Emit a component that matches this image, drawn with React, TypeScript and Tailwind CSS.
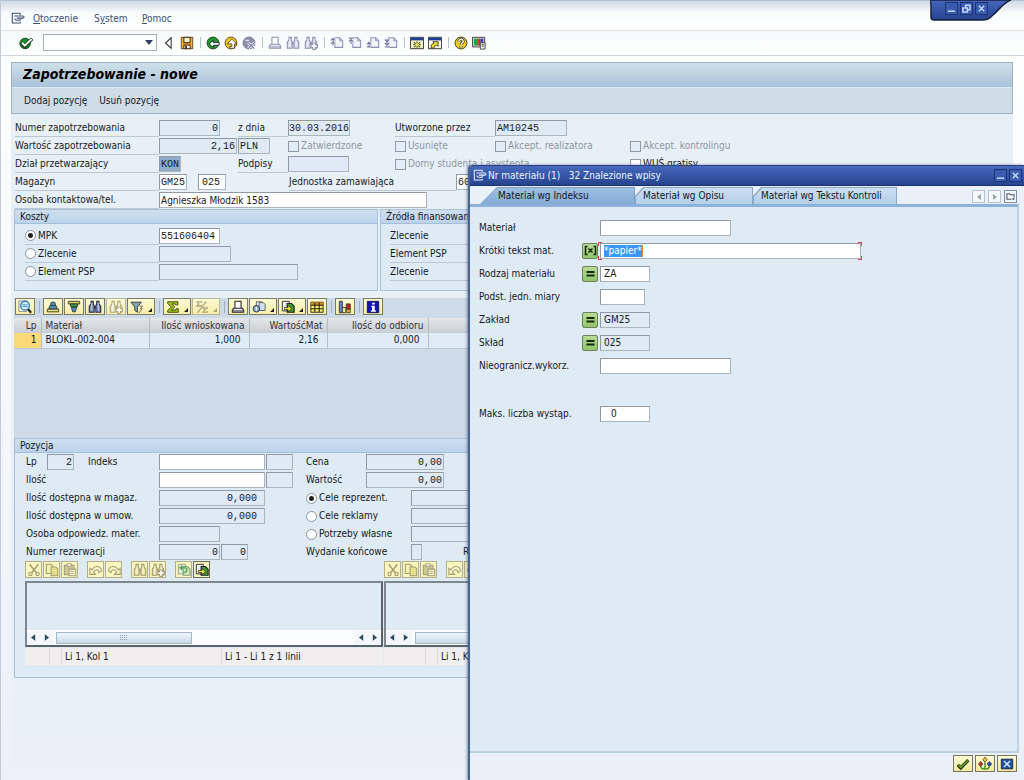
import React from "react";

const field =
  "h-[16px] border border-[#aab4bd] border-t-[#8f9aa5] border-l-[#8f9aa5] text-[10px] leading-[14px] outline-none rounded-none";
const mono = "font-['Liberation_Mono',monospace]";
const rowLine = "flex h-[18px] items-center border-b border-[#bcc8d3]";

function Field({
  id,
  label,
  value = "",
  w,
  edit = false,
  right = false,
  sans = false,
  pad = "px-[3px]",
}: {
  id: string;
  label?: string;
  value?: string;
  w: string;
  edit?: boolean;
  right?: boolean;
  sans?: boolean;
  pad?: string;
}) {
  return (
    <input
      id={id}
      aria-label={label}
      defaultValue={value}
      readOnly={!edit}
      className={`${field} ${w} ${edit ? "bg-white" : "bg-[#dfeaf4]"} ${
        right ? "text-right" : ""
      } ${sans ? "" : mono} ${pad}`}
    />
  );
}

function Check({ label, dim = true }: { label: string; dim?: boolean }) {
  return (
    <label
      className={`flex items-center gap-[2px] whitespace-nowrap ${
        dim ? "text-[#8e979f]" : "text-[#1b1b1b]"
      }`}
    >
      <input
        type="checkbox"
        disabled={dim}
        className={`h-[11px] w-[11px] shrink-0 appearance-none border border-[#8f9aa5] ${
          dim ? "bg-[#e3edf6]" : "bg-white"
        }`}
      />
      {label}
    </label>
  );
}

function Radio({
  name,
  label,
  on = false,
}: {
  name: string;
  label: string;
  on?: boolean;
}) {
  return (
    <label className="flex items-center gap-[2px] whitespace-nowrap">
      <input
        type="radio"
        name={name}
        defaultChecked={on}
        className="h-[11px] w-[11px] shrink-0 appearance-none rounded-full border border-[#8a939c] bg-white checked:bg-[radial-gradient(circle,#222_0,#222_2px,#fff_3px)]"
      />
      {label}
    </label>
  );
}

/* ---------- icons ---------- */

function Svg({
  children,
  size = "h-[14px] w-[14px]",
}: {
  children: React.ReactNode;
  size?: string;
}) {
  return (
    <svg viewBox="0 0 16 16" className={`${size} shrink-0`} fill="none">
      {children}
    </svg>
  );
}

function MenuIcon({ color }: { color: string }) {
  return (
    <Svg>
      <path
        d="M10.500 3.500V1.500H1.500V12.500H10.500V11"
        stroke={color}
        strokeWidth="1.2"
      />
      <path
        d="M4 4.500h9.500c1.800 0 1.800 2.500 0 2.500H10.500v2.500H6L4 7.500M6.500 7h4"
        stroke={color}
        strokeWidth="1.2"
      />
    </Svg>
  );
}

function OkIcon() {
  return (
    <Svg>
      <circle cx="7" cy="8.5" r="6" fill="#1f8a2d" stroke="#0d3c14" />
      <path d="M3 7.500l3.500 4L15 3" stroke="#10300f" strokeWidth="4" />
      <path d="M3.500 7.500l3 3.500L14.500 3.500" stroke="#fff" strokeWidth="2.200" />
    </Svg>
  );
}

function BackTri() {
  return (
    <Svg>
      <path d="M10.500 2v12L4 8z" fill="#fff" stroke="#333" strokeWidth="1.2" />
    </Svg>
  );
}

function SaveIcon() {
  return (
    <Svg>
      <path d="M1.500 1.500h13v13h-13z" fill="#e0882a" stroke="#3a2610" />
      <path d="M4.500 1.500h7v6h-7z" fill="#f4f0c0" stroke="#3a2610" />
      <path d="M4.500 10.500h7v4h-7z" fill="#fff" stroke="#3a2610" />
      <path d="M6 11.500h2v3H6z" fill="#3a2610" />
      <path d="M2.500 2v12M13.500 2v12" stroke="#f7d34a" />
    </Svg>
  );
}

function NavBack() {
  return (
    <Svg>
      <circle cx="8" cy="8" r="6.800" fill="#25952f" stroke="#143d18" />
      <path
        d="M3.500 9l5-4v2.500h6.500v3H8.500V13z"
        fill="#fff"
        stroke="#113"
        strokeWidth=".9"
      />
    </Svg>
  );
}

function NavExit() {
  return (
    <Svg>
      <circle cx="8" cy="8" r="6.800" fill="#f0c516" stroke="#5a4310" />
      <path
        d="M3.500 9L9 3.500 14.500 9H12v5H6.500v-2H9V9z"
        fill="#fff"
        stroke="#432"
        strokeWidth=".9"
      />
    </Svg>
  );
}

function NavCancel() {
  return (
    <Svg>
      <circle cx="8" cy="8" r="6.800" fill="#8f8fae" stroke="#71718f" />
      <path d="M7 7.500l7 7M14 7.500l-7 7" stroke="#fff" strokeWidth="3" />
      <path d="M7 7.500l7 7M14 7.500l-7 7" stroke="#6d6d8d" strokeWidth="1.200" />
      <path d="M4 5h4" stroke="#e3e3ef" strokeWidth="1.400" />
    </Svg>
  );
}

function PrintIcon({ color = "#9090b2" }: { color?: string }) {
  return (
    <Svg>
      <path d="M4.500 9.500v-8h7v8" fill="#fff" stroke={color} strokeWidth="1.2" />
      <path
        d="M3 9.500h10l1.500 2v2.500h-13v-2.500z"
        fill="#e9e9f2"
        stroke={color}
        strokeWidth="1.2"
      />
      <path d="M2 12.500h12" stroke={color} />
    </Svg>
  );
}

function FindIcon({
  color = "#9090b2",
  fill = "#dcdcec",
  plus = false,
}: {
  color?: string;
  fill?: string;
  plus?: boolean;
}) {
  return (
    <Svg>
      <path
        d="M3.500 1.500h2.500v3l1 2v7.500H1.500V7l2-2.500zM10 1.500h2.500v3l2 2.500v7H9V6.500l1-2z"
        fill={fill}
        stroke={color}
        strokeWidth="1.300"
      />
      <path d="M7 7h2v3H7z" fill={color} />
      <path d="M4.300 3v9M11.800 3v9" stroke="#fff" strokeOpacity=".7" />
      {plus && (
        <>
          <path d="M11.500 7.500v8.500M7.500 11.500h8.500" stroke={color} strokeWidth="4" />
          <path d="M11.500 8.500v6M8.500 11.500h6" stroke="#fff" strokeWidth="2" />
        </>
      )}
    </Svg>
  );
}

function PageIcon({ kind }: { kind: number }) {
  const arrows = [
    "M1 5l2.500-2.500L6 5M1 9l2.500-2.500L6 9M3.500 3v8",
    "M1 2.500h5M1 6.500L3.500 4 6 6.500M3.500 4v5",
    "M1 9.500L3.500 7 6 9.500M3.500 7v5M1 12.500h5",
    "M1 4l2.500 2.500L6 4M1 8l2.500 2.500L6 8M1 12.500h5M3.500 3v8",
  ];
  return (
    <Svg>
      <path
        d="M5.500 2h5.500l3.500 3.500V13h-9z"
        fill="#f3f3fa"
        stroke="#8f8fb3"
        strokeWidth="1.2"
      />
      <path d="M11 2v3.500h3.500" stroke="#8f8fb3" />
      <path d={arrows[kind]} stroke="#fff" strokeWidth="3" />
      <path d={arrows[kind]} stroke="#7a7aa4" strokeWidth="1.300" />
    </Svg>
  );
}

function SessionIcon() {
  return (
    <Svg>
      <path d="M.5 1.500h15v13H.5z" fill="#f6f4c4" stroke="#222" />
      <path d="M1 2h14v3H1z" fill="#1c3f9c" />
      <path
        d="M8 6v2.500M8 11.500V14M3.500 10H6M10 10h2.500M4.500 7l2 2M11.500 7l-2 2M4.500 13l2-2M11.500 13l-2-2"
        stroke="#55551a"
        strokeWidth="1.200"
      />
      <path d="M7 9h2v2H7z" fill="#f0e020" />
    </Svg>
  );
}

function ShortcutIcon() {
  return (
    <Svg>
      <path d="M.5 1.500h15v13H.5z" fill="#f6f4e4" stroke="#222" />
      <path d="M1 2h14v3H1z" fill="#1c3f9c" />
      <path
        d="M3.500 13.500L4 10l3-2-1.500-1.500h6v5.500L10 10.500l-2.500 1-1 2.500z"
        fill="#f0e030"
        stroke="#333"
      />
    </Svg>
  );
}

function HelpIcon() {
  return (
    <Svg>
      <circle cx="8" cy="8" r="6.800" fill="#efcb22" stroke="#3a3010" />
      <path
        d="M5.500 6.500C5.500 2.500 11 3 10.500 6.500 10.500 8 8 8 8 10M8 11.500v1.700"
        stroke="#333"
        strokeWidth="3.200"
      />
      <path
        d="M5.500 6.500C5.500 2.500 11 3 10.500 6.500 10.500 8 8 8 8 10M8 11.500v1.700"
        stroke="#fff"
        strokeWidth="1.500"
      />
    </Svg>
  );
}

function MonitorIcon() {
  return (
    <Svg>
      <path d="M.5 1.500h14v11H.5z" fill="#ddd" stroke="#333" />
      <path d="M2 3h5v8H2z" fill="#27a33a" />
      <path d="M7 3h3v8H7z" fill="#d02a2a" />
      <path d="M10 3h3v8h-3z" fill="#2a4ed0" />
      <path d="M9.500 7.500h5.500v7.500H9.500z" fill="#e8e8e8" stroke="#444" />
      <path d="M11 9.500h2.500M11 11.500h2.500" stroke="#444" />
    </Svg>
  );
}

function DetailIcon() {
  return (
    <Svg>
      <path d="M1 1h9v12H1z" fill="#f3f3e8" stroke="#888" />
      <circle cx="8" cy="6.500" r="5" fill="#d6f2fb" stroke="#3b83b8" strokeWidth="1.600" />
      <path d="M5 5.500h6M5 7.500h6" stroke="#3b83b8" />
      <path d="M11.500 10.500l3.500 4" stroke="#222" strokeWidth="2.500" />
    </Svg>
  );
}

function SortIcon({ down = false }: { down?: boolean }) {
  return (
    <Svg>
      {down ? (
        <>
          <path d="M1.500 1.500h13v3h-13z" fill="#d8d84c" stroke="#333" />
          <path d="M3.500 4.500h9l-1 3.500h-7z" fill="#2f9c46" stroke="#333" />
          <path d="M5 8.500h6l-1.500 5h-3z" fill="#4a8fd0" stroke="#333" />
        </>
      ) : (
        <>
          <path d="M6 2.500h4l1 4H5z" fill="#4a8fd0" stroke="#333" />
          <path d="M4.500 6.500h7l1.500 3.500H3z" fill="#4a9ccc" stroke="#333" />
          <path d="M1.500 10.500h13v3h-13z" fill="#e4e46a" stroke="#333" />
        </>
      )}
    </Svg>
  );
}

function FilterIcon() {
  return (
    <Svg>
      <path d="M1 2.500h12L8.500 8v6l-3-2V8z" fill="#7fa6b8" stroke="#333" />
      <path d="M11 7h3l-2 3h2l-4 5" stroke="#555" />
    </Svg>
  );
}

function SumIcon() {
  return (
    <Svg>
      <path
        d="M2 2h11.500v3.500H11l-.5-1H6.500L10 8l-4 3.500h5l.5-1.500h2.500v4H2v-2l4-4-4-4z"
        fill="#a6c81e"
        stroke="#2c3a08"
      />
    </Svg>
  );
}

function SubtotalIcon() {
  return (
    <Svg>
      <path
        d="M2 2h5v1.500M2 2l2.500 2.500L2 7h5V5.500M9 9h5v1.500M9 9l2.500 2.500L9 14h5v-1.500M13 1.500L3 14.500"
        stroke="#a7a37e"
        strokeWidth="1.400"
      />
    </Svg>
  );
}

function ViewsIcon() {
  return (
    <Svg>
      <path d="M5 2h6l2.500 2.500V12H5z" fill="#fff" stroke="#556" />
      <path d="M8 3h5l2 2v7H8z" fill="#cfe0f0" stroke="#556" />
      <circle cx="5" cy="10" r="3.800" fill="#7fa8d4" stroke="#334" />
      <path d="M5 8v4" stroke="#fff" strokeWidth="1.400" />
    </Svg>
  );
}

function ExportIcon({ dim = false, back = false }: { dim?: boolean; back?: boolean }) {
  const line = dim ? "#8c9a7c" : "#222";
  return (
    <Svg>
      <path d="M1.500 1.500h8v11h-8z" fill="#e8eef6" stroke={line} />
      <path
        d="M7 4h5l3 3v7H7z"
        fill={dim ? "#cfe8c0" : "#3f9a33"}
        stroke={line}
        strokeWidth="1.300"
      />
      {back ? (
        <path d="M6 3L3.500 5.500 6 8M4 5.500h5c3 0 3 5 0 5H7" stroke="#5fae58" strokeWidth="1.800" />
      ) : (
        <path d="M4 8.500h4V6l4 4-4 3.500V11H4z" fill="#f2e83a" stroke={line} strokeWidth=".8" />
      )}
    </Svg>
  );
}

function LayoutIcon() {
  return (
    <Svg>
      <path d="M1 2.500h14v11.500H1z" fill="#f6ee6a" stroke="#222" />
      <path d="M1 3h14v3H1z" fill="#e68a1c" />
      <path d="M1 6h14M1 10h14M5.500 3v11M10.500 3v11" stroke="#222" strokeWidth="1.200" />
    </Svg>
  );
}

function ChartIcon() {
  return (
    <Svg>
      <path d="M1.500 1.500h3.500v13H1.500z" fill="#5a8ad0" stroke="#333" />
      <path d="M5 8.500h4v6H5z" fill="#eeee8c" stroke="#333" />
      <path d="M9.500 4.500h4.500v6H9.500z" fill="#c82424" stroke="#333" />
      <path d="M10 10.500h4v4h-4z" fill="#e8c030" stroke="#333" />
    </Svg>
  );
}

function InfoIcon() {
  return (
    <Svg>
      <path d="M1.500 1.500h13v13h-13z" fill="#1414b4" stroke="#0a0a50" />
      <path d="M7 3h3v2H7zM6 6.500h4V12h1.500v1.500H5.500V12H7V8H6z" fill="#fff" />
    </Svg>
  );
}

const dimLine = "#a39d70";

function CutIcon() {
  return (
    <Svg>
      <path d="M3 1.500L10.500 11M13 1.500L5.500 11" stroke={dimLine} strokeWidth="1.800" />
      <circle cx="4" cy="12.500" r="1.900" stroke={dimLine} strokeWidth="1.300" />
      <circle cx="12" cy="12.500" r="1.900" stroke={dimLine} strokeWidth="1.300" />
    </Svg>
  );
}

function CopyIcon() {
  return (
    <Svg>
      <path d="M1.500 1.500h5.500l2 2V12H1.500z" fill="#f4f1b8" stroke={dimLine} strokeWidth="1.200" />
      <path d="M7 4.500h5.500l2 2v8H7z" fill="#e6e08c" stroke={dimLine} strokeWidth="1.200" />
    </Svg>
  );
}

function PasteIcon() {
  return (
    <Svg>
      <path d="M1.500 2.500h11v11h-11z" fill="#cdc898" stroke={dimLine} strokeWidth="1.200" />
      <path d="M4.500 1h5v3h-5z" fill="#eee" stroke={dimLine} />
      <path d="M7 7h7.500v7.500H7z" fill="#faf8dc" stroke={dimLine} strokeWidth="1.200" />
      <path d="M8.500 9.500h4M8.500 12h4" stroke={dimLine} />
    </Svg>
  );
}

function UndoIcon({ redo = false }: { redo?: boolean }) {
  return (
    <Svg>
      <path
        d={
          redo
            ? "M15 6v7H8.500l2.500-2.500C9 6.500 5 7 4.500 11L1.500 9C3 2.500 10 2.500 12.500 8z"
            : "M1 6v7h6.500L5 10.500C7 6.500 11 7 11.500 11l3-2C13 2.500 6 2.500 3.500 8z"
        }
        fill="#f8f5cf"
        stroke={dimLine}
        strokeWidth="1.200"
      />
    </Svg>
  );
}

/* ---------- small parts ---------- */

function FlatBtn({ name, children }: { name: string; children: React.ReactNode }) {
  return (
    <button
      aria-label={name}
      className="flex h-[18px] w-[18px] items-center justify-center"
    >
      {children}
    </button>
  );
}

function GridBtn({
  name,
  children,
  menu = false,
  dim = false,
}: {
  name: string;
  children: React.ReactNode;
  menu?: boolean;
  dim?: boolean;
}) {
  return (
    <button
      aria-label={name}
      className={`flex h-[17px] shrink-0 items-center border bg-linear-to-b from-[#fdfbd6] to-[#f6eda6] ${
        menu ? "w-[28px] justify-between px-[2px]" : "w-[20px] justify-center"
      } ${dim ? "border-[#b9b799]" : "border-[#7d7b63]"}`}
    >
      {children}
      {menu && (
        <svg viewBox="0 0 4 4" className="mt-[7px] h-[4px] w-[4px]">
          <path d="M4 0v4H0z" fill={dim ? "#a7a37e" : "#222"} />
        </svg>
      )}
    </button>
  );
}

function EditBtn({
  name,
  children,
  active = false,
}: {
  name: string;
  children: React.ReactNode;
  active?: boolean;
}) {
  return (
    <button
      aria-label={name}
      className={`flex h-[17px] w-[17px] shrink-0 items-center justify-center border bg-[#fbf6c0] ${
        active ? "border-[#6f6d55]" : "border-[#b3af88]"
      }`}
    >
      {children}
    </button>
  );
}

function Sep() {
  return (
    <span className="flex w-[8px] shrink-0 justify-center">
      <span className="h-[11px] w-px bg-[#b3c3d2]" />
    </span>
  );
}

function GridSep() {
  return (
    <span className="flex h-[17px] w-[6px] shrink-0 items-center justify-center">
      <span className="h-[12px] w-px bg-[#9fb2c4]" />
    </span>
  );
}

function Group({
  title,
  className = "",
  children,
}: {
  title: string;
  className?: string;
  children: React.ReactNode;
}) {
  return (
    <section className={`border border-[#a9c1d8] bg-[#dfebf4] ${className}`}>
      <h2 className="h-[14px] border-b border-[#a4bfda] bg-linear-to-b from-[#cfdff0] to-[#bdd3ea] pl-[5px] leading-[13px] whitespace-nowrap">
        {title}
      </h2>
      {children}
    </section>
  );
}

function Arrow({ dir, name }: { dir: "left" | "right"; name: string }) {
  return (
    <button
      aria-label={name}
      className="flex h-[13px] w-[13px] items-center justify-center bg-[#f2f6fa]"
    >
      <svg viewBox="0 0 6 8" className="h-[7px] w-[5px]">
        <path d={dir === "left" ? "M5 0v8L0 4z" : "M1 0v8l5-4z"} fill="#2b4a5c" />
      </svg>
    </button>
  );
}

function Editor({ id, first, thumb }: { id: string; first: string; thumb: string }) {
  return (
    <div className="w-[358px] shrink-0">
      <div className="flex h-[20px] items-start gap-px">
        <EditBtn name="Wytnij"><CutIcon /></EditBtn>
        <EditBtn name="Kopiuj"><CopyIcon /></EditBtn>
        <EditBtn name="Wklej"><PasteIcon /></EditBtn>
        <span className="w-[7px]" />
        <EditBtn name="Cofnij"><UndoIcon /></EditBtn>
        <EditBtn name="Ponów"><UndoIcon redo /></EditBtn>
        <span className="w-[7px]" />
        <EditBtn name="Szukaj"><FindIcon color={dimLine} fill="#e8e3b0" /></EditBtn>
        <EditBtn name="Szukaj dalej"><FindIcon color={dimLine} fill="#e8e3b0" plus /></EditBtn>
        <span className="w-[7px]" />
        <EditBtn name="Wczytaj"><ExportIcon dim back /></EditBtn>
        <EditBtn name="Zapisz lokalnie" active><ExportIcon /></EditBtn>
      </div>
      <div className="border-2 border-[#5b6167] border-t-[#7f868d] border-l-[#7f868d]">
        <textarea
          aria-label={id}
          readOnly
          className="block h-[47px] w-full resize-none bg-[#dfebf4] outline-none"
        />
        <div className="flex h-[15px] items-center bg-[#fafcfd]">
          <Arrow dir="left" name="W lewo" />
          <Arrow dir="right" name="W prawo" />
          <div className="flex flex-1 pl-[3px]">
            <div
              className={`flex h-[12px] items-center justify-center border border-[#a4b8cb] bg-linear-to-b from-[#edf4fa] to-[#cbdbe9] ${thumb}`}
            >
              <svg viewBox="0 0 8 5" className="h-[5px] w-[8px]">
                <path d="M0 .5h8M0 2.500h8M0 4.500h8" stroke="#8ba0b4" strokeDasharray="1 1" />
              </svg>
            </div>
          </div>
          <Arrow dir="left" name="W lewo" />
          <Arrow dir="right" name="W prawo" />
        </div>
      </div>
      <div className="mt-px flex h-[17px] bg-[#f0eeee] leading-[17px]">
        <span className={`border-r border-[#dddcdd] ${first}`} />
        <span className="w-[12px] border-r border-[#dddcdd]" />
        <span className="w-[160px] border-r border-[#dddcdd] pl-[3px]">Li 1, Kol 1</span>
        <span className="flex-1 pl-[3px]">Li 1 - Li 1 z 1 linii</span>
      </div>
    </div>
  );
}

/* ---------- main window ---------- */

function MenuBar() {
  return (
    <nav className="flex h-[31px] items-center border-t border-b border-t-[#b4c2d6] border-b-[#dadfe5] bg-linear-to-b from-[#cfd9e6] via-[#f8fafc] via-40% to-white pt-[7px] pl-[10px] text-[#3c5078]">
      <MenuIcon color="#3c5078" />
      <a href="#otoczenie" className="ml-[8px] w-[61px]"><u>O</u>toczenie</a>
      <a href="#system" className="w-[48px]">S<u>y</u>stem</a>
      <a href="#pomoc"><u>P</u>omoc</a>
    </nav>
  );
}

function ToolBar() {
  return (
    <div className="flex h-[25px] items-center border-b border-[#cdd6de] bg-linear-to-b from-[#f7f9fb] to-white pb-px pl-[16px]">
      <FlatBtn name="Enter"><OkIcon /></FlatBtn>
      <div className="relative ml-[8px] h-[17px] w-[114px]">
        <select
          aria-label="Polecenie"
          className="h-full w-full appearance-none border border-[#a7b0b9] bg-white outline-none"
        />
        <svg viewBox="0 0 8 5" className="pointer-events-none absolute top-[6px] right-[4px] h-[5px] w-[8px]">
          <path d="M0 0h8L4 5z" fill="#2e3f66" />
        </svg>
      </div>
      <span className="w-[3px]" />
      <FlatBtn name="Zwiń"><BackTri /></FlatBtn>
      <FlatBtn name="Zapisz"><SaveIcon /></FlatBtn>
      <Sep />
      <FlatBtn name="Wstecz"><NavBack /></FlatBtn>
      <FlatBtn name="Wyjście"><NavExit /></FlatBtn>
      <FlatBtn name="Anuluj"><NavCancel /></FlatBtn>
      <Sep />
      <FlatBtn name="Drukuj"><PrintIcon /></FlatBtn>
      <FlatBtn name="Szukaj"><FindIcon /></FlatBtn>
      <FlatBtn name="Szukaj dalej"><FindIcon plus /></FlatBtn>
      <Sep />
      <FlatBtn name="Pierwsza strona"><PageIcon kind={0} /></FlatBtn>
      <FlatBtn name="Poprzednia strona"><PageIcon kind={1} /></FlatBtn>
      <FlatBtn name="Następna strona"><PageIcon kind={2} /></FlatBtn>
      <FlatBtn name="Ostatnia strona"><PageIcon kind={3} /></FlatBtn>
      <Sep />
      <FlatBtn name="Nowe okno"><SessionIcon /></FlatBtn>
      <FlatBtn name="Skrót"><ShortcutIcon /></FlatBtn>
      <Sep />
      <FlatBtn name="Pomoc"><HelpIcon /></FlatBtn>
      <FlatBtn name="Układ lokalny"><MonitorIcon /></FlatBtn>
    </div>
  );
}

function WinBtn({ name, d }: { name: string; d: string }) {
  return (
    <button
      aria-label={name}
      className="flex h-[13px] w-[13px] items-center justify-center border border-[#1c3474] bg-[#3a5cb0]"
    >
      <svg viewBox="0 0 10 10" className="h-[9px] w-[9px]">
        <path d={d} stroke="#c3d6f6" strokeWidth="1.700" fill="none" />
      </svg>
    </button>
  );
}

const minimize = "M1 8h8";
const restore = "M1 4.500h5v4.500H1zM4 4V1.500h5v5H6.500";
const close = "M2 2l6 6M8 2L2 8";

function WindowControls() {
  return (
    <div className="absolute top-0 right-[12px] h-[21px] w-[82px]">
      <svg viewBox="0 0 82 21" className="absolute inset-0 h-full w-full">
        <defs>
          <linearGradient id="ctl" x1="0" y1="0" x2="0" y2="1">
            <stop offset="0" stopColor="#4667bd" />
            <stop offset="1" stopColor="#27428f" />
          </linearGradient>
        </defs>
        <path
          d="M-2 0h83C74 2 68 11 63 15c-4 4-6 5-11 5H4c-2 0-3-1-3-3V5C1 3 0 1-2 0z"
          fill="url(#ctl)"
          stroke="#16203f"
          strokeWidth="1.500"
        />
      </svg>
      <div className="relative flex gap-[2px] pt-[2px] pl-[15px]">
        <WinBtn name="Minimalizuj" d={minimize} />
        <WinBtn name="Przywróć" d={restore} />
        <WinBtn name="Zamknij" d={close} />
      </div>
    </div>
  );
}

const headCols =
  "grid grid-cols-[144px_79px_50px_107px_100px_135px_1fr] items-center h-[18px] whitespace-nowrap";

function HeaderForm() {
  return (
    <div className="pl-[4px]">
      <div className={headCols}>
        <label htmlFor="nr" className={rowLine}>Numer zapotrzebowania</label>
        <Field id="nr" value="0" w="w-[61px]" right pad="px-px" />
        <label htmlFor="dnia" className={rowLine}>z dnia</label>
        <Field id="dnia" value="30.03.2016" w="w-[62px]" pad="px-0" />
        <label htmlFor="kto" className={rowLine}>Utworzone przez</label>
        <Field id="kto" value="AM10245" w="w-[72px]" pad="px-px" />
      </div>
      <div className={headCols}>
        <label htmlFor="wart" className={rowLine}>Wartość zapotrzebowania</label>
        <Field id="wart" value="2,16" w="w-[78px]" right pad="px-px" />
        <Field id="waluta" label="Waluta" value="PLN" w="w-[32px]" pad="px-px" />
        <Check label="Zatwierdzone" />
        <Check label="Usunięte" />
        <Check label="Akcept. realizatora" />
        <Check label="Akcept. kontrolingu" />
      </div>
      <div className={headCols}>
        <label htmlFor="dzial" className={rowLine}>Dział przetwarzający</label>
        <input
          id="dzial"
          readOnly
          defaultValue="KON"
          className={`${field} ${mono} w-[22px] bg-[#8fabc9] px-px`}
        />
        <label htmlFor="podpisy" className={rowLine}>Podpisy</label>
        <Field id="podpisy" w="w-[61px]" />
        <Check label="Domy studenta i asystenta" />
        <span />
        <Check label="WUŚ gratisy" dim={false} />
      </div>
      <div className="flex h-[18px] items-center whitespace-nowrap">
        <label htmlFor="mag" className={`${rowLine} w-[144px]`}>Magazyn</label>
        <Field id="mag" value="GM25" w="w-[28px]" edit pad="px-px" />
        <span className="w-[11px]" />
        <Field id="skl" label="Skład" value="025" w="w-[28px]" edit />
        <span className="w-[63px]" />
        <label htmlFor="jedn" className={`${rowLine} w-[167px]`}>Jednostka zamawiająca</label>
        <Field id="jedn" value="60" w="w-[61px]" edit pad="px-px" />
      </div>
      <div className="flex h-[18px] items-center whitespace-nowrap">
        <label htmlFor="osoba" className={`${rowLine} w-[144px]`}>Osoba kontaktowa/tel.</label>
        <Field id="osoba" value="Agnieszka Młodzik 1583" w="w-[268px]" edit sans pad="px-px" />
      </div>
    </div>
  );
}

function CostGroups() {
  return (
    <div className="flex gap-[2px] pl-[3px]">
      <Group title="Koszty" className="h-[82px] w-[364px] shrink-0">
        <div className="pt-[3px] pl-[10px]">
          <div className="flex h-[18px] items-center">
            <div className={`${rowLine} w-[134px]`}><Radio name="koszt" label="MPK" on /></div>
            <Field id="mpk" label="MPK" value="551606404" w="w-[61px]" edit pad="px-px" />
          </div>
          <div className="flex h-[18px] items-center">
            <div className={`${rowLine} w-[134px]`}><Radio name="koszt" label="Zlecenie" /></div>
            <Field id="zlec" label="Zlecenie" w="w-[72px]" />
          </div>
          <div className="flex h-[18px] items-center">
            <div className={`${rowLine} w-[134px]`}><Radio name="koszt" label="Element PSP" /></div>
            <Field id="psp" label="Element PSP" w="w-[139px]" />
          </div>
        </div>
      </Group>
      <Group title="Źródła finansowania" className="h-[82px] flex-1">
        <div className="pt-[3px] pl-[9px]">
          <p className={rowLine}>Zlecenie</p>
          <p className={rowLine}>Element PSP</p>
          <p className={rowLine}>Zlecenie</p>
        </div>
      </Group>
    </div>
  );
}

function ItemsGrid() {
  return (
    <div className="mt-[7px] ml-[3px] h-[140px] bg-[#cddbe8]">
      <div className="flex h-[20px] items-start gap-px pl-px">
        <GridBtn name="Szczegóły"><DetailIcon /></GridBtn>
        <GridSep />
        <GridBtn name="Sortuj rosnąco"><SortIcon /></GridBtn>
        <GridBtn name="Sortuj malejąco"><SortIcon down /></GridBtn>
        <GridBtn name="Szukaj"><FindIcon color="#2b3045" fill="#7c90c0" /></GridBtn>
        <GridBtn name="Szukaj dalej" dim><FindIcon color="#aaa67f" fill="#f1eec6" plus /></GridBtn>
        <GridBtn name="Filtr" menu><FilterIcon /></GridBtn>
        <GridSep />
        <GridBtn name="Suma" menu><SumIcon /></GridBtn>
        <GridBtn name="Suma pośrednia" menu dim><SubtotalIcon /></GridBtn>
        <GridSep />
        <GridBtn name="Drukuj"><PrintIcon color="#222" /></GridBtn>
        <GridBtn name="Widoki" menu><ViewsIcon /></GridBtn>
        <GridBtn name="Eksport" menu><ExportIcon /></GridBtn>
        <GridBtn name="Układ"><LayoutIcon /></GridBtn>
        <GridSep />
        <GridBtn name="Grafika"><ChartIcon /></GridBtn>
        <GridSep />
        <GridBtn name="Informacja"><InfoIcon /></GridBtn>
      </div>
      <table className="w-full table-fixed border-collapse">
        <colgroup>
          <col className="w-[27px]" />
          <col className="w-[108px]" />
          <col className="w-[100px]" />
          <col className="w-[78px]" />
          <col className="w-[101px]" />
          <col />
        </colgroup>
        <thead>
          <tr className="h-[15px] bg-linear-to-b from-[#e3e6ea] to-[#c9ced5] text-right leading-[15px] text-[#333] *:border-r *:border-[#b3bbc4] *:p-0 *:pr-[4px] *:font-normal">
            <th>Lp</th>
            <th className="text-left"><span className="pl-[4px]">Materiał</span></th>
            <th>Ilość wnioskowana</th>
            <th>WartośćMat</th>
            <th>Ilość do odbioru</th>
            <th />
          </tr>
        </thead>
        <tbody>
          <tr className="h-[15px] border-b border-[#b9c7d4] bg-[#dfebf7] text-right leading-[14px] *:border-r *:border-[#b3bfcb] *:p-0 *:pr-[8px]">
            <td className="bg-[#fbd878]"><span className="-mr-[4px]">1</span></td>
            <td className="text-left"><span className="pl-[4px]">BLOKL-002-004</span></td>
            <td>1,000</td>
            <td>2,16</td>
            <td>0,000</td>
            <td />
          </tr>
        </tbody>
      </table>
    </div>
  );
}

const posCols = "grid h-[18px] grid-cols-[133px_147px_1fr] items-center whitespace-nowrap";

function PositionGroup() {
  return (
    <Group title="Pozycja" className="ml-[3px] h-[240px]">
      <div className="pl-[11px]">
        <div className={posCols}>
          <div className="flex items-center">
            <label htmlFor="lp" className="w-[21px]">Lp</label>
            <Field id="lp" value="2" w="w-[27px]" right pad="px-px" />
            <label htmlFor="indeks" className="ml-[14px]">Indeks</label>
          </div>
          <div className="flex gap-px">
            <Field id="indeks" w="w-[106px]" edit />
            <Field id="indeks2" label="Indeks dodatkowy" w="w-[27px]" />
          </div>
          <div className="flex items-center">
            <label htmlFor="cena" className="w-[60px]">Cena</label>
            <Field id="cena" value="0,00" w="w-[78px]" right pad="px-px" />
          </div>
        </div>
        <div className={posCols}>
          <label htmlFor="ilosc">Ilość</label>
          <div className="flex gap-px">
            <Field id="ilosc" w="w-[106px]" edit />
            <Field id="jm" label="Jednostka miary" w="w-[27px]" />
          </div>
          <div className="flex items-center">
            <label htmlFor="wartosc" className="w-[60px]">Wartość</label>
            <Field id="wartosc" value="0,00" w="w-[78px]" right pad="px-px" />
          </div>
        </div>
        <div className={posCols}>
          <label htmlFor="magaz">Ilość dostępna w magaz.</label>
          <Field id="magaz" value="0,000" w="w-[106px]" right pad="pr-[7px]" />
          <div className="flex items-center">
            <div className="w-[105px]"><Radio name="cel" label="Cele reprezent." on /></div>
            <Field id="rep" label="Cele reprezent." w="w-[96px]" />
          </div>
        </div>
        <div className={posCols}>
          <label htmlFor="umow">Ilość dostępna w umow.</label>
          <Field id="umow" value="0,000" w="w-[106px]" right pad="pr-[7px]" />
          <div className="flex items-center">
            <div className="w-[105px]"><Radio name="cel" label="Cele reklamy" /></div>
            <Field id="rek" label="Cele reklamy" w="w-[96px]" />
          </div>
        </div>
        <div className={posCols}>
          <label htmlFor="odp">Osoba odpowiedz. mater.</label>
          <Field id="odp" w="w-[61px]" />
          <div className="flex items-center">
            <div className="w-[105px]"><Radio name="cel" label="Potrzeby własne" /></div>
            <Field id="wlas" label="Potrzeby własne" w="w-[96px]" />
          </div>
        </div>
        <div className={posCols}>
          <label htmlFor="rez">Numer rezerwacji</label>
          <div className="flex gap-px">
            <Field id="rez" value="0" w="w-[61px]" right pad="px-px" />
            <Field id="rezp" label="Pozycja rezerwacji" value="0" w="w-[27px]" right pad="px-px" />
          </div>
          <div className="flex items-center">
            <label htmlFor="konc" className="w-[105px]">Wydanie końcowe</label>
            <Field id="konc" w="w-[11px]" />
            <span className="ml-[41px]">R</span>
          </div>
        </div>
      </div>
      <div className="flex gap-px overflow-hidden pl-[10px]">
        <Editor id="Tekst pozycji" first="w-[25px]" thumb="w-[136px]" />
        <Editor id="Uwagi" first="w-[42px]" thumb="w-[136px]" />
      </div>
    </Group>
  );
}

/* ---------- search dialog ---------- */

function MatchBtn({ wild = false }: { wild?: boolean }) {
  return (
    <button
      aria-label="Opcje wyboru"
      className="flex h-[16px] w-[16px] items-center justify-center rounded-[2px] border border-[#6f7f58] bg-linear-to-b from-[#b7dc94] to-[#8fc46a]"
    >
      <svg viewBox="0 0 13 11" className="h-[11px] w-[13px]" fill="none" stroke="#16250c">
        {wild ? (
          <path d="M3.500 1.500h-2v8h2M9.500 1.500h2v8h-2M4.500 3.500l4 4M8.500 3.500l-4 4" strokeWidth="1.500" />
        ) : (
          <path d="M2.500 4h8M2.500 7.500h8" strokeWidth="2" />
        )}
      </svg>
    </button>
  );
}

function DialogRow({
  id,
  label,
  btn,
  children,
}: {
  id: string;
  label: string;
  btn?: React.ReactNode;
  children: React.ReactNode;
}) {
  return (
    <div className="grid h-[23px] grid-cols-[103px_18px_1fr] items-center">
      <label htmlFor={id}>{label}</label>
      <div>{btn}</div>
      <div className="flex">{children}</div>
    </div>
  );
}

function Tab({
  children,
  active = false,
  w,
}: {
  children: React.ReactNode;
  active?: boolean;
  w: string;
}) {
  return (
    <button
      role="tab"
      aria-selected={active}
      className={`relative h-[17px] text-left whitespace-nowrap ${w} ${
        active ? "pl-[18px]" : "pl-[8px]"
      }`}
    >
      <span
        className={`absolute inset-0 ${
          active
            ? "bg-[#7f9fc2] [clip-path:polygon(17px_0,100%_0,100%_100%,0_100%)]"
            : "bg-[#8aa9c8] [clip-path:polygon(8px_0,100%_0,100%_100%,0_100%,0_9px)]"
        }`}
      />
      <span
        className={`absolute top-px right-px bottom-0 left-px ${
          active
            ? "bg-linear-to-b from-[#9dbfe2] to-[#84abd6] [clip-path:polygon(16px_0,100%_0,100%_100%,0_100%)]"
            : "bg-linear-to-b from-[#cbdff0] to-[#b4cfe8] [clip-path:polygon(8px_0,100%_0,100%_100%,0_100%,0_9px)]"
        }`}
      />
      <span className="relative">{children}</span>
    </button>
  );
}

const tool = "flex h-[13px] w-[13px] items-center justify-center border bg-[#f4f8fb]";
const foot =
  "flex h-[17px] w-[20px] items-center justify-center border border-[#77755c] bg-linear-to-b from-[#fdfbd2] to-[#f4e99c]";

function SearchDialog() {
  return (
    <div
      role="dialog"
      aria-label="Nr materiału (1) 32 Znalezione wpisy"
      className="absolute top-[165px] right-0 bottom-0 left-[467px] flex flex-col rounded-tl-[4px] border-l-2 border-[#4a6492] bg-[#e9f0f7] shadow-[-1px_0_3px_rgba(60,80,110,0.6)]"
    >
      <header className="flex h-[21px] items-center rounded-tl-[3px] border-t border-b border-t-[#2a3f80] border-b-[#1c2f6b] bg-linear-to-b from-[#4669bd] to-[#26438f] pr-[2px] pl-[3px] text-[#eef3fc]">
        <MenuIcon color="#e8effb" />
        <h2 className="ml-px flex-1 whitespace-pre">Nr materiału (1)   32 Znalezione wpisy</h2>
        <div className="flex gap-[2px]">
          <WinBtn name="Minimalizuj" d={minimize} />
          <WinBtn name="Zamknij" d={close} />
        </div>
      </header>
      <div className="flex h-[18px] items-end pr-[7px] pl-[10px]" role="tablist">
        <Tab active w="w-[155px]">Materiał wg Indeksu</Tab>
        <Tab w="w-[118px]">Materiał wg Opisu</Tab>
        <Tab w="w-[144px]">Materiał wg Tekstu Kontroli</Tab>
        <div className="flex flex-1 justify-end gap-[3px] pb-px">
          <button aria-label="Poprzednia karta" className={`${tool} border-[#b7c2cc]`}>
            <svg viewBox="0 0 4 6" className="h-[6px] w-[4px]"><path d="M4 0v6L0 3z" fill="#9aa5ae" /></svg>
          </button>
          <button aria-label="Następna karta" className={`${tool} border-[#b7c2cc]`}>
            <svg viewBox="0 0 4 6" className="h-[6px] w-[4px]"><path d="M0 0v6l4-3z" fill="#9aa5ae" /></svg>
          </button>
          <button aria-label="Lista kart" className={`${tool} border-[#7c8fa3]`}>
            <svg viewBox="0 0 10 10" className="h-[9px] w-[9px]">
              <path d="M6 8H1V2h3l1 1h4v3" stroke="#44586e" strokeWidth="1.200" fill="none" />
              <path d="M6.500 7h3.500L8.300 9.500z" fill="#44586e" />
            </svg>
          </button>
        </div>
      </div>
      <div className="mr-[5px] flex-1 border-t-[3px] border-r-2 border-b-2 border-t-[#8db1d8] border-r-[#bdd0e1] border-b-[#bccfdf] bg-[#dfebf4] pt-[9px] pl-[9px]">
        <DialogRow id="d-mat" label="Materiał">
          <Field id="d-mat" w="w-[131px]" edit sans />
        </DialogRow>
        <DialogRow id="d-tekst" label="Krótki tekst mat." btn={<MatchBtn wild />}>
          <div className="relative flex w-[261px]">
            <Field id="d-tekst" w="w-[261px] text-transparent" value="*papier*" edit sans />
            <span className="pointer-events-none absolute top-[2px] left-[4px] border-r border-[#e08030] bg-[#3b97f5] leading-[12px] text-white">
              *papier*
            </span>
            <span className="absolute -top-px -left-[2px] h-[4px] w-[4px] border-t border-l border-[#d04848]" />
            <span className="absolute -bottom-px -left-[2px] h-[4px] w-[4px] border-b border-l border-[#d04848]" />
            <span className="absolute -top-px -right-px h-[4px] w-[4px] border-t border-r border-[#d04848]" />
            <span className="absolute -right-px -bottom-px h-[4px] w-[4px] border-r border-b border-[#d04848]" />
          </div>
        </DialogRow>
        <DialogRow id="d-rodz" label="Rodzaj materiału" btn={<MatchBtn />}>
          <Field id="d-rodz" value="ZA" w="w-[50px]" edit sans />
        </DialogRow>
        <DialogRow id="d-jedn" label="Podst. jedn. miary">
          <Field id="d-jedn" w="w-[45px]" edit sans />
        </DialogRow>
        <DialogRow id="d-zakl" label="Zakład" btn={<MatchBtn />}>
          <Field id="d-zakl" value="GM25" w="w-[50px]" sans />
        </DialogRow>
        <DialogRow id="d-skl" label="Skład" btn={<MatchBtn />}>
          <Field id="d-skl" value="025" w="w-[50px]" sans />
        </DialogRow>
        <DialogRow id="d-nie" label="Nieogranicz.wykorz.">
          <Field id="d-nie" w="w-[131px]" edit sans />
        </DialogRow>
        <div className="mt-[25px]">
          <DialogRow id="d-maks" label="Maks. liczba wystąp.">
            <Field id="d-maks" value="0" w="w-[50px]" edit sans pad="pl-[10px]" />
          </DialogRow>
        </div>
      </div>
      <footer className="flex h-[27px] items-start justify-end gap-[2px] pt-[2px] pr-[7px]">
        <button aria-label="Kontynuuj" className={foot}>
          <Svg>
            <path d="M2 9l3.500 3.500L14 3.500" stroke="#1f2a0c" strokeWidth="3.600" />
            <path d="M2.500 9l3 3L13.500 4" stroke="#6dae2a" strokeWidth="1.500" />
          </Svg>
        </button>
        <button aria-label="Wybór wielokrotny" className={foot}>
          <Svg>
            <path d="M8 0l2.500 3L8 6 5.500 3z" fill="#f0c030" stroke="#433" strokeWidth=".8" />
            <path d="M3 5l2.500 3L3 11 .5 8z" fill="#d03030" stroke="#433" strokeWidth=".8" />
            <path d="M13 5l2.500 3-2.500 3-2.500-3z" fill="#2a4ec8" stroke="#223" strokeWidth=".8" />
            <path d="M8 6v8M3 10c0 5 10 5 10 0" stroke="#3c8c2a" strokeWidth="1.600" />
          </Svg>
        </button>
        <button aria-label="Anuluj" className={foot}>
          <Svg>
            <path d="M1.500 2.500h13v11h-13z" fill="#1d4f9e" stroke="#0d2450" />
            <path d="M4.500 4.500l7 7M11.500 4.500l-7 7" stroke="#d5e6f8" strokeWidth="1.700" />
          </Svg>
        </button>
      </footer>
    </div>
  );
}

export default function App() {
  return (
    <div className="relative flex min-h-screen flex-col overflow-hidden border-l border-[#c3c9d8] bg-linear-to-b from-white to-[#eaf1f8] font-['DejaVu_Sans_Condensed','DejaVu_Sans',sans-serif] text-[10px] leading-[14px] text-[#16191d]">
      <MenuBar />
      <ToolBar />
      <WindowControls />
      <main className="mt-[6px] mr-[11px] mb-[14px] ml-[10px] flex-1 bg-linear-to-b from-[#e8f0f7] to-[#e9f0f7]">
        <div className="border border-[#a3b1be]">
          <h1 className="h-[24px] bg-linear-to-b from-[#cfe0ea] via-[#bdd1e0] to-[#a9c3dc] pl-[11px] text-[14px] leading-[23px] font-bold text-black italic">
            Zapotrzebowanie - nowe
          </h1>
          <div className="flex h-[26px] items-center gap-[12px] border-t border-[#dbe7f1] bg-[#cfdde8] pl-[12px]">
            <button>Dodaj pozycję</button>
            <button>Usuń pozycję</button>
          </div>
        </div>
        <div className="pt-[5px]">
          <HeaderForm />
          <CostGroups />
          <ItemsGrid />
          <PositionGroup />
        </div>
      </main>
      <SearchDialog />
    </div>
  );
}
